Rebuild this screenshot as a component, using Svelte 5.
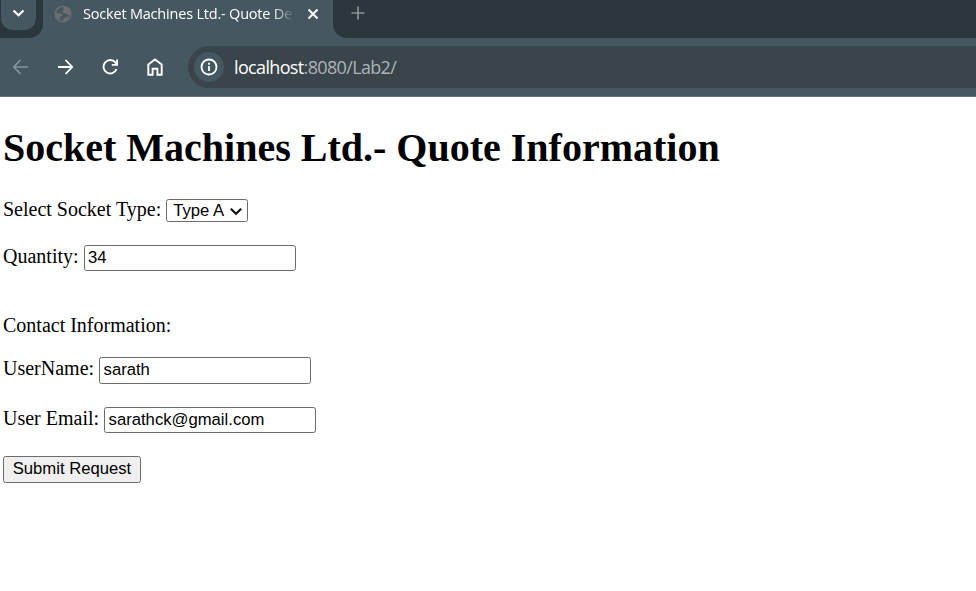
<script>
  let socketType = $state('Type A');
  let quantity = $state('34');
  let username = $state('sarath');
  let email = $state('sarathck@gmail.com');
</script>

<div class="window">
  <header>
    <div class="tabstrip">
      <div class="search-wrap">
        <button class="search" aria-label="Search tabs">
          <svg width="36" height="30" viewBox="0 0 36 30"><path d="M13.5 10.5 18.5 15.3 23.5 10.5" fill="none" stroke="#fff" stroke-width="2.1" /></svg>
        </button>
      </div>
      <div class="tab">
        <svg class="globe" width="18" height="18" viewBox="0 0 18 18">
          <circle cx="9" cy="9" r="7.8" fill="none" stroke="#6c6e72" stroke-width="1.5" />
          <path d="M1.2 8.3h4.6q2.4.2 2.7 2.6H6.3v3.2H4.2L1.4 11zM9.2 1.3l4.8 1 2.4 4.2-.5 3.4-2 .3-1.4-2H9.3L7.8 6.7l1.8-1.5zM9.6 13l2.4-.5 1.4-1.4 1.7.4-2.6 3.8-3.2 1.1z" fill="#6c6e72" />
        </svg>
        <span class="title">Socket Machines Ltd.- Quote De</span>
        <svg class="close" width="12" height="12" viewBox="0 0 12 12"><path d="m1.5 1.5 9 9m0-9-9 9" stroke="#fff" stroke-width="1.9" /></svg>
      </div>
      <div class="rest">
        <svg width="14" height="14" viewBox="0 0 14 14"><path d="M7 .5v13M.5 7h13" stroke="#8c9296" stroke-width="1.7" /></svg>
      </div>
    </div>
    <div class="toolbar">
      <svg width="16" height="16" viewBox="0 0 16 16"><path d="M16 8H2M8.5 1 1.8 8l6.7 7" fill="none" stroke="#87949b" stroke-width="1.7" /></svg>
      <svg width="16" height="16" viewBox="0 0 16 16"><path d="M1 8h14M8.5 1l6.7 7-6.7 7" fill="none" stroke="#fff" stroke-width="1.8" /></svg>
      <svg width="16" height="16" viewBox="0 0 16 16"><path d="M14.5 10.2A6.7 6.7 0 1 1 13.4 3.4L14.5 5" fill="none" stroke="#fff" stroke-width="1.9" /><path d="M16 .5v6.2H9.8V4.9h4.4V.5z" fill="#fff" /></svg>
      <svg width="16" height="18" viewBox="0 0 16 18"><path d="M1.3 6.5 8 1.5l6.7 5v10.2h-4.3v-6H5.6v6H1.3z" fill="none" stroke="#fff" stroke-width="1.9" /></svg>
      <div class="address">
        <div class="info">
          <svg width="18" height="18" viewBox="0 0 18 18"><circle cx="9" cy="9" r="7.5" fill="none" stroke="#fff" stroke-width="1.8" /><path d="M9 8v5M9 4.8v1.9" stroke="#fff" stroke-width="1.8" /></svg>
        </div>
        <span class="url"><span class="host">localhost</span><span class="path">:8080/Lab2/</span></span>
      </div>
    </div>
  </header>

  <main>
    <h1>Socket Machines Ltd.- Quote Information</h1>
    <form onsubmit={(e) => e.preventDefault()}>
      <div class="row type">
        <label for="type">Select Socket Type:</label>
        <div class="select">
          <select id="type" bind:value={socketType}><option>Type A</option></select>
          <svg class="chevron" width="14" height="9" viewBox="0 0 14 9"><path d="m1.8 1.8 5.2 5 5.2-5" fill="none" stroke="#111" stroke-width="2.2" /></svg>
        </div>
      </div>
      <div class="row quantity">
        <label for="quantity">Quantity:</label>
        <input id="quantity" bind:value={quantity} />
      </div>
      <p>Contact Information:</p>
      <div class="row username">
        <label for="username">UserName:</label>
        <input id="username" bind:value={username} />
      </div>
      <div class="row email">
        <label for="email">User Email:</label>
        <input id="email" bind:value={email} spellcheck="false" />
      </div>
      <button class="submit">Submit Request</button>
    </form>
  </main>
</div>

<style>
  :global(body) { margin: 0; background: #fff; }
  * { box-sizing: border-box; }
  svg { display: block; flex: none; }
  .window { width: 976px; height: 591px; overflow: hidden; background: #fff; }
  header { height: 97px; background: #455760; border-bottom: 1px solid #65757d; font-family: "Open Sans", "Noto Sans", sans-serif; }
  .tabstrip { height: 38px; display: flex; }
  .search-wrap { width: 43px; height: 38px; background: #2c373d; border-radius: 0 0 14px 0; padding-left: 1px; flex: none; }
  .search { width: 35px; height: 30px; padding: 0; border: 0; border-radius: 0 0 12px 12px; background: #455760; overflow: hidden; }
  .search svg { margin-left: -1px; }
  .tab { width: 290px; height: 28px; display: flex; align-items: center; padding-left: 11px; color: #fff; flex: none; }
  .title { width: 213px; margin-left: 11px; white-space: nowrap; font-size: 14.5px; line-height: 28px; letter-spacing: -0.2px; -webkit-mask-image: linear-gradient(90deg, #000 190px, transparent 211px); mask-image: linear-gradient(90deg, #000 190px, transparent 211px); }
  .close { margin-left: 11px; }
  .rest { flex: 1; height: 38px; background: #2c373d; border-radius: 0 0 0 14px; padding: 6px 0 0 18px; }
  .toolbar { height: 58px; display: flex; align-items: center; padding-left: 12px; gap: 29px; }
  .address { flex: 1; height: 42px; margin-left: -4px; border-radius: 21px 0 0 21px; background: #39454b; display: flex; align-items: center; padding-left: 6px; }
  .info { width: 30px; height: 30px; border-radius: 50%; background: #455760; display: grid; place-items: center; }
  .url { margin-left: 10px; font-size: 18px; line-height: 30px; letter-spacing: -0.65px; }
  .host { color: #fff; }
  .path { color: #adb4b7; }
  main { padding: 29px 0 0 3px; color: #000; font-family: "Liberation Serif", serif; font-size: 20px; }
  h1 { margin: 0; font-size: 40px; line-height: 44px; white-space: nowrap; }
  .row { display: flex; align-items: center; gap: 5px; }
  label { line-height: 24px; white-space: nowrap; margin-top: -4px; }
  input, select, .submit { margin: 0; border: 1px solid #6b6b6b; border-radius: 2.5px; font-family: "Liberation Sans", sans-serif; font-size: 16.667px; color: #000; }
  input { width: 212px; height: 26px; padding: 0 3.5px 1px; background: #fff; }
  .select { position: relative; width: 82px; height: 23px; }
  select { display: block; width: 82px; height: 23px; padding: 0 0 0 6px; background: #fff; appearance: none; }
  .chevron { position: absolute; right: 5px; top: 8px; pointer-events: none; }
  .type { margin-top: 29px; height: 23px; }
  .quantity { margin-top: 23px; height: 26px; }
  p { margin: 42px 0 0; line-height: 24px; }
  .username { margin-top: 20px; height: 27px; }
  .username label { margin-top: -6px; }
  .username input { height: 27px; }
  .email { margin-top: 23px; height: 26px; }
  .submit { display: block; width: 138px; height: 27px; margin-top: 23px; padding: 0 0 2px; background: #efefef; }
</style>
